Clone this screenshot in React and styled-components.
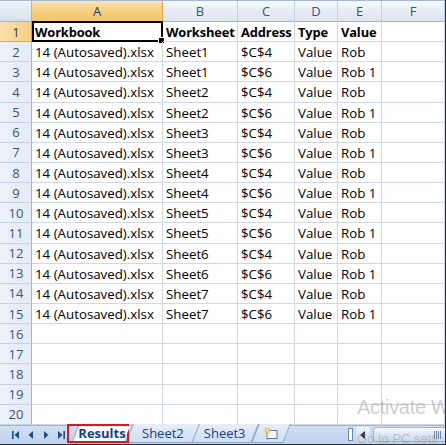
import React from "react";
import styled, { createGlobalStyle } from "styled-components";

const GlobalStyle = createGlobalStyle`
  html, body {
    margin: 0;
    padding: 0;
    background: #ffffff;
  }
  body {
    font-family: "Open Sans", "Liberation Sans", sans-serif;
  }
`;

const COLUMNS = [
  { key: "A", width: 131 },
  { key: "B", width: 75 },
  { key: "C", width: 57 },
  { key: "D", width: 43 },
  { key: "E", width: 44 },
  { key: "F", width: 63 },
];

const HEADERS = ["Workbook", "Worksheet", "Address", "Type", "Value", ""];

const buildRows = () => {
  const rows = [];
  for (let i = 0; i < 14; i++) {
    const sheet = Math.floor(i / 2) + 1;
    const second = i % 2 === 1;
    rows.push([
      "14 (Autosaved).xlsx",
      `Sheet${sheet}`,
      second ? "$C$6" : "$C$4",
      "Value",
      second ? "Rob 1" : "Rob",
      "",
    ]);
  }
  while (rows.length < 19) rows.push(["", "", "", "", "", ""]);
  return rows;
};

const Window = styled.div`
  width: 446px;
  height: 445px;
  overflow: hidden;
  position: relative;
  background: #ffffff;
  box-sizing: border-box;
  border-right: 1px solid #2b2b2b;
`;

const Grid = styled.div`
  display: grid;
  grid-template-columns: 32px ${COLUMNS.map((c) => c.width + "px").join(" ")};
  grid-template-rows: 21px repeat(20, 20.15px);
  border-top: 1px solid #a9b8cc;
  box-sizing: border-box;
`;

const Corner = styled.div`
  position: relative;
  box-sizing: border-box;
  background: linear-gradient(#eef3f9, #d5e0ee);
  border-right: 1px solid #9eb6ce;
  border-bottom: 1px solid #9eb6ce;
  &::after {
    content: "";
    position: absolute;
    right: 3px;
    bottom: 3px;
    width: 0;
    height: 0;
    border-left: 12px solid transparent;
    border-bottom: 12px solid #e3e9f1;
  }
`;

const ColHead = styled.div`
  box-sizing: border-box;
  display: flex;
  align-items: center;
  justify-content: center;
  font-size: 13px;
  color: ${(p) => (p.$active ? "#2a3f5a" : "#3c5573")};
  background: ${(p) =>
    p.$active
      ? "linear-gradient(#fbe2b0, #f6cd7c 55%, #f2c56a)"
      : "linear-gradient(#f7f9fc, #e6ecf4 55%, #dde5ef)"};
  border-right: 1px solid ${(p) => (p.$active ? "#f1a54a" : "#c5d2e3")};
  border-bottom: 1px solid ${(p) => (p.$active ? "#f29536" : "#9eb6ce")};
`;

const RowHead = styled.div`
  box-sizing: border-box;
  display: flex;
  align-items: center;
  justify-content: center;
  padding-left: 1px;
  font-size: 13px;
  color: ${(p) => (p.$active ? "#2a3f5a" : "#3c5573")};
  background: ${(p) =>
    p.$active
      ? "linear-gradient(90deg, #fbe0ae, #f6cf82)"
      : "linear-gradient(90deg, #edf2f9, #e4ebf5)"};
  border-right: 1px solid ${(p) => (p.$active ? "#f29536" : "#9eb6ce")};
  border-bottom: 1px solid ${(p) => (p.$active ? "#f1a54a" : "#c5d2e3")};
`;

const Cell = styled.div`
  position: relative;
  box-sizing: border-box;
  display: flex;
  align-items: center;
  padding: 1px 0 0 3px;
  font-size: ${(p) => (p.$bold ? 12.9 : 13.3)}px;
  font-weight: ${(p) => (p.$bold ? 700 : 400)};
  letter-spacing: ${(p) => (p.$bold ? -0.15 : 0)}px;
  color: #000000;
  white-space: nowrap;
  overflow: visible;
  border-right: 1px solid #d0d7e5;
  border-bottom: 1px solid #d0d7e5;
`;

const Selection = styled.div`
  position: absolute;
  left: 0px;
  top: -1px;
  right: -1px;
  bottom: -1px;
  border: 2px solid #000000;
  pointer-events: none;
  &::after {
    content: "";
    position: absolute;
    right: -4px;
    bottom: -4px;
    width: 5px;
    height: 5px;
    background: #000000;
    border: 1px solid #ffffff;
  }
`;

const TabBar = styled.div`
  height: 18px;
  display: flex;
  align-items: stretch;
  background: linear-gradient(#d0dff2, #bfd3ed);
  border-top: 1px solid #9eb6ce;
  border-bottom: 1px solid #303030;
  box-sizing: content-box;
`;

const BottomStrip = styled.div`
  height: 2px;
  background: #eef1f5;
`;

const NavGroup = styled.div`
  width: 66px;
  display: flex;
  align-items: center;
  padding-left: 12px;
  gap: 7px;
  box-sizing: border-box;
`;

const NavButton = styled.div`
  width: 8px;
  height: 10px;
  display: flex;
  align-items: center;
  justify-content: center;
  svg {
    display: block;
  }
`;

const Tabs = styled.div`
  display: flex;
  align-items: stretch;
  margin-top: -2px;
`;

const Tab = styled.div`
  position: relative;
  display: flex;
  align-items: center;
  justify-content: center;
  height: 19px;
  padding: 0 ${(p) => (p.$pad ? p.$pad : 10)}px;
  margin-left: ${(p) => (p.$shift !== undefined ? p.$shift : -4)}px;
  font-size: 13px;
  font-weight: ${(p) => (p.$active ? 700 : 400)};
  color: #15428b;
  z-index: ${(p) => (p.$active ? 3 : 1)};
  &::before {
    content: "";
    position: absolute;
    inset: 0 2px;
    transform: skewX(-22deg);
    background: ${(p) =>
      p.$active
        ? "linear-gradient(#ffffff, #f4f8fd)"
        : "linear-gradient(#e6eef9, #cfdef2)"};
    border-left: 1px solid #8fa9cc;
    border-right: 1px solid #8fa9cc;
    border-bottom: 1px solid #8fa9cc;
    z-index: -1;
  }
`;

const MarkedTab = styled(Tab)`
  margin-left: 1px;
  width: 62px;
  padding: 0 0 0 8px;
  height: 19px;
  box-sizing: border-box;
  border: 2px solid #e3141d;
  &::before {
    inset: 0 0 0 6px;
    border-right: none;
    border-bottom: none;
  }
`;

const Spacer = styled.div`
  flex: 1;
`;

const ScrollArea = styled.div`
  width: 97px;
  display: flex;
  align-items: center;
  gap: 3px;
`;

const SplitBox = styled.div`
  width: 5px;
  height: 13px;
  background: #ffffff;
  border: 1px solid #6d87ad;
  box-sizing: border-box;
`;

const ArrowButton = styled.div`
  width: 14px;
  height: 15px;
  display: flex;
  align-items: center;
  justify-content: center;
  background: linear-gradient(#eef3fa, #cbd9ec);
  border-radius: 2px;
`;

const Thumb = styled.div`
  flex: 1;
  height: 15px;
  margin-right: -6px;
  display: flex;
  align-items: center;
  justify-content: flex-end;
  padding-right: 8px;
  background: linear-gradient(#f9fbfe, #dde7f4 50%, #c9d8ec);
  border: 1px solid #9db1cf;
  border-radius: 3px;
  box-sizing: border-box;
`;

const Grip = styled.div`
  width: 8px;
  height: 8px;
  background: repeating-linear-gradient(
    90deg,
    #6f86a8 0,
    #6f86a8 1px,
    transparent 1px,
    transparent 2px
  );
`;

const Watermark = styled.div`
  position: absolute;
  left: 357px;
  top: ${(p) => p.$top}px;
  z-index: 5;
  font-family: "Liberation Sans", "Open Sans", sans-serif;
  font-size: ${(p) => p.$size}px;
  letter-spacing: ${(p) => p.$spacing || 0}px;
  color: rgba(140, 140, 140, 0.45);
  white-space: nowrap;
  pointer-events: none;
`;

const Tri = ({ dir, bar }) => (
  <svg width="8" height="10" viewBox="0 0 8 10">
    {dir === "left" ? (
      <>
        {bar && <rect x="0" y="1" width="1.6" height="8" fill="#1c4c8c" />}
        <polygon points={bar ? "7,1 2.5,5 7,9" : "6,1 1.5,5 6,9"} fill="#1c4c8c" />
      </>
    ) : (
      <>
        <polygon points={bar ? "1,1 5.5,5 1,9" : "2,1 6.5,5 2,9"} fill="#1c4c8c" />
        {bar && <rect x="6.4" y="1" width="1.6" height="8" fill="#1c4c8c" />}
      </>
    )}
  </svg>
);

const InsertIcon = () => (
  <svg width="16" height="13" viewBox="0 0 16 13">
    <rect x="4" y="3.5" width="10" height="8" fill="#f4f6f9" stroke="#6c7f99" />
    <path d="M6 11.5 L4 13 L4 11" fill="#6c7f99" />
    <circle cx="4.5" cy="3.5" r="2.6" fill="#f6b73c" />
    <circle cx="4.5" cy="3.5" r="1.2" fill="#fff3c8" />
  </svg>
);

export default function App() {
  const rows = buildRows();
  return (
    <>
      <GlobalStyle />
      <Window>
        <Grid>
          <Corner />
          {COLUMNS.map((c) => (
            <ColHead key={c.key} $active={c.key === "A"}>
              {c.key}
            </ColHead>
          ))}

          <RowHead $active>1</RowHead>
          {HEADERS.map((h, i) => (
            <Cell key={"h" + i} $bold>
              {h}
              {i === 0 && <Selection />}
            </Cell>
          ))}

          {rows.map((row, r) => (
            <React.Fragment key={r}>
              <RowHead>{r + 2}</RowHead>
              {row.map((v, c) => (
                <Cell key={c}>{v}</Cell>
              ))}
            </React.Fragment>
          ))}
        </Grid>

        <TabBar>
          <NavGroup>
            <NavButton>
              <Tri dir="left" bar />
            </NavButton>
            <NavButton>
              <Tri dir="left" />
            </NavButton>
            <NavButton>
              <Tri dir="right" />
            </NavButton>
            <NavButton>
              <Tri dir="right" bar />
            </NavButton>
          </NavGroup>
          <Tabs>
            <MarkedTab $active>Results</MarkedTab>
            <Tab $pad={15} $shift={-2}>Sheet2</Tab>
            <Tab $pad={11} $shift={-6}>Sheet3</Tab>
            <Tab $pad={10}>
              <InsertIcon />
            </Tab>
          </Tabs>
          <Spacer />
          <ScrollArea>
            <SplitBox />
            <ArrowButton>
              <svg width="6" height="8" viewBox="0 0 6 8">
                <polygon points="5,0 0,4 5,8" fill="#22324a" />
              </svg>
            </ArrowButton>
            <Thumb>
              <Grip />
            </Thumb>
          </ScrollArea>
        </TabBar>
        <BottomStrip />

        <Watermark $top={396} $size={20} $spacing={-0.3}>
          Activate W
        </Watermark>
        <Watermark $top={431} $size={13}>
          Go to PC setti
        </Watermark>
      </Window>
    </>
  );
}
